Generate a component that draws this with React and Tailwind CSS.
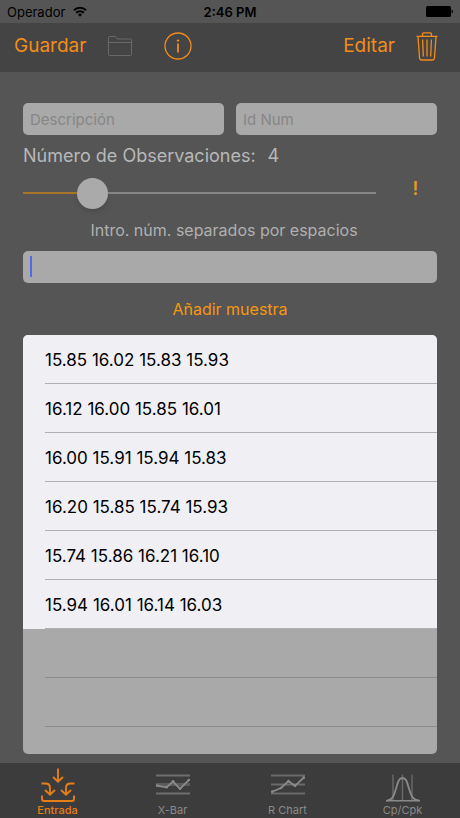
import React, { useState } from "react";

const samples = [
  "15.85 16.02 15.83 15.93",
  "16.12 16.00 15.85 16.01",
  "16.00 15.91 15.94 15.83",
  "16.20 15.85 15.74 15.93",
  "15.74 15.86 16.21 16.10",
  "15.94 16.01 16.14 16.03",
];

const MIN = 2;
const MAX = 14;

const fieldClass =
  "block w-full h-8 rounded-[5px] bg-[#a9a9a9] px-[7px] text-[15px] text-black placeholder:text-[#868686] outline-none";

const WifiIcon = () => (
  <svg width="14" height="11" viewBox="0 0 14 11" fill="none" stroke="#000" strokeWidth="2">
    <path d="M.9 4.2a8.7 8.7 0 0 1 12.2 0" />
    <path d="M3.2 6.7a5.4 5.4 0 0 1 7.6 0" />
    <path d="M7 10.8 4.9 8.5a3 3 0 0 1 4.2 0z" fill="#000" stroke="none" />
  </svg>
);

const BatteryIcon = () => (
  <svg width="27" height="11" viewBox="0 0 27 11">
    <rect x="0" y="0" width="25" height="11" rx="1.5" />
    <path d="M25.6 3.5q1.4.5 1.4 2t-1.4 2z" />
  </svg>
);

const FolderIcon = () => (
  <svg width="24" height="21" viewBox="0 0 24 21" fill="none" stroke="#696969" strokeWidth="1">
    <path d="M.5 18.5V1.5q0-1 1-1h5.8q.9 0 1.2.8l.8 1.7h13.2q1 0 1 1v14.500q0 1-1 1h-21q-1 0-1-1z" />
    <path d="M.5 6.500h23" />
  </svg>
);

const InfoIcon = () => (
  <svg width="28" height="28" viewBox="0 0 28 28" fill="none" stroke="currentColor">
    <circle cx="14" cy="14" r="13" strokeWidth="1.3" />
    <path d="M14 11.5v9" strokeWidth="1.8" />
    <circle cx="14" cy="8.6" r="1.2" fill="currentColor" stroke="none" />
  </svg>
);

const TrashIcon = () => (
  <svg width="22" height="29" viewBox="0 0 22 29" fill="none" stroke="currentColor" strokeWidth="1.3">
    <path d="M.5 4.3h21M6.5 4.2V2.100q0-1.200 1.200-1.200h6.600q1.200 0 1.200 1.200v2.100" />
    <path d="M2 4.500l1.500 21.200q.2 2.300 2.300 2.300h10.400q2.100 0 2.300-2.300L20 4.500" />
    <path d="M6.600 7.500l.7 17M11 7.500v17M15.400 7.500l-.7 17" />
  </svg>
);

const InputIcon = () => (
  <svg width="34" height="34" viewBox="0 0 34 34" fill="none" stroke="currentColor" strokeWidth="1.9">
    <path d="M17 .5v13M12 9l5 4.8L22 9" />
    <path d="M.5 15.5h4q4.5 0 4.5 4.5v6M4 22l5 4.8 5-4.8" />
    <path d="M33.5 15.5h-4q-4.5 0-4.5 4.5v6M20 22l5 4.8 5-4.8" />
    <path d="M1 27.5v3.5q0 2 2 2h28q2 0 2-2v-3.5" />
  </svg>
);

const XBarIcon = () => (
  <svg width="34" height="34" viewBox="0 0 34 34" fill="none" stroke="currentColor">
    <path d="M0 7.5h34M0 25.5h34" strokeWidth="2" opacity=".65" />
    <path d="M0 16.5h34" strokeWidth="3" opacity=".4" />
    <path d="M0 17.5l10.5 1.8 6.5-5.8 7 7.2 9.5-9.2" strokeWidth="1.8" />
    <g fill="currentColor" stroke="none">
      <circle cx="1.2" cy="17.5" r="1.3" />
      <circle cx="10.5" cy="19.2" r="1.4" />
      <circle cx="17" cy="13.5" r="1.4" />
      <circle cx="24" cy="20.5" r="1.4" />
      <circle cx="32.8" cy="12" r="1.3" />
    </g>
  </svg>
);

const RChartIcon = () => (
  <svg width="34" height="34" viewBox="0 0 34 34" fill="none" stroke="currentColor">
    <path d="M0 7.5h34M0 16.5h34M0 25.5h34" strokeWidth="2" opacity=".6" />
    <path d="M.5 24L10 20l7.5-6.8 6.5 4.6L33.5 9" strokeWidth="1.8" />
    <g fill="currentColor" stroke="none">
      <circle cx="1.3" cy="23.6" r="1.3" />
      <circle cx="10" cy="20" r="1.3" />
      <circle cx="17.5" cy="13.2" r="1.4" />
      <circle cx="24" cy="17.8" r="1.4" />
      <circle cx="32.8" cy="9.6" r="1.3" />
    </g>
  </svg>
);

const BellIcon = () => (
  <svg width="34" height="34" viewBox="0 0 34 34" fill="none" stroke="currentColor">
    <path d="M7 6.5v26M16.500 6.5v26M26 6.5v26" strokeWidth="1.4" opacity=".6" />
    <path d="M1 32.500C7 32 8.500 26 10.500 19 12 13.500 13 10 16.500 10S21 13.500 22.500 19C24.500 26 26 32 33 32.500" strokeWidth="1.8" />
    <path d="M0 32.8h34" strokeWidth="1.5" />
  </svg>
);

const tabs = [
  { label: "Entrada", Icon: InputIcon },
  { label: "X-Bar", Icon: XBarIcon },
  { label: "R Chart", Icon: RChartIcon },
  { label: "Cp/Cpk", Icon: BellIcon },
];

const App = () => {
  const [count, setCount] = useState(4);
  const [active, setActive] = useState("Entrada");
  const percent = ((count - MIN) / (MAX - MIN)) * 100;

  return (
    <div className="min-h-screen flex flex-col bg-[#555555] font-['Inter',sans-serif]">
      {/* Status bar */}
      <div className="h-[23px] grid grid-cols-3 items-center px-[7px] text-[13px] leading-4 text-black">
        <div className="flex items-center gap-2">
          <span>Operador</span>
          <WifiIcon />
        </div>
        <span className="text-center font-semibold">2:46 PM</span>
        <div className="flex justify-end">
          <BatteryIcon />
        </div>
      </div>

      {/* Toolbar */}
      <header className="h-[49px] flex items-center bg-[#444444] px-[14px] pb-[3px] text-[19px] text-[#f28c1c]">
        <button type="button">Guardar</button>
        <button type="button" aria-label="Abrir" className="ml-[22px]">
          <FolderIcon />
        </button>
        <button type="button" aria-label="Información" className="ml-8">
          <InfoIcon />
        </button>
        <button type="button" className="ml-auto">Editar</button>
        <button type="button" aria-label="Borrar" className="ml-[21px] mr-2">
          <TrashIcon />
        </button>
      </header>

      <main className="flex-1 flex flex-col gap-[9px] px-[23px] pt-[31px] pb-[9px]">
        <div className="grid grid-cols-2 gap-3">
          <input type="text" aria-label="Descripción" placeholder="Descripción" className={fieldClass} />
          <input type="text" aria-label="Id Num" placeholder="Id Num" className={fieldClass} />
        </div>

        <label htmlFor="count" className="flex gap-3 text-lg leading-6 text-[#b8b8b8]">
          <span>Número de Observaciones:</span>
          <span>{count}</span>
        </label>

        <div className="h-8 flex items-center">
          <div className="relative flex-1 flex items-center">
            <div className="absolute inset-x-0 h-[2px] bg-[#858585]">
              <div className="h-full bg-[#a87528]" style={{ width: `${percent}%` }} />
            </div>
            <input
              id="count"
              type="range"
              min={MIN}
              max={MAX}
              value={count}
              onChange={(e) => setCount(Number(e.target.value))}
              className="relative w-full h-8 appearance-none bg-transparent outline-none [&::-webkit-slider-thumb]:appearance-none [&::-webkit-slider-thumb]:size-[31px] [&::-webkit-slider-thumb]:rounded-full [&::-webkit-slider-thumb]:bg-[#aaaaaa] [&::-webkit-slider-thumb]:shadow-md"
            />
          </div>
          <button type="button" className="ml-[18px] w-[43px] pb-2 text-lg leading-6 font-semibold text-[#e89a1c]">
            !
          </button>
        </div>

        <label htmlFor="sample" className="pr-3 text-center text-base leading-6 text-[#b0b0b0]">
          Intro. núm. separados por espacios
        </label>

        <div className="relative">
          <input id="sample" type="text" className={fieldClass} />
          <span className="absolute left-[7px] top-[5px] h-[21px] w-[2px] bg-[#4f6bea]" />
        </div>

        <div className="flex-1 flex flex-col -mt-[9px]">
          <button type="button" className="h-[52px] self-center text-base text-[#f5980f]">
            Añadir muestra
          </button>

          <ul className="flex-1 overflow-hidden rounded-[5px] bg-[#a9a9a9] text-[17px] text-black">
            {samples.map((sample) => (
              <li key={sample} className="h-[49px] bg-[#efeff4] pl-[22px]">
                <div className="h-full flex items-center border-b border-[#b0b0b4] pt-[3px]">{sample}</div>
              </li>
            ))}
            {/* Empty rows */}
            <li className="ml-[22px] h-[49px] border-b border-[#8c8c8c]" />
            <li className="ml-[22px] h-[49px] border-b border-[#8c8c8c]" />
          </ul>
        </div>
      </main>

      {/* Tab bar */}
      <nav className="h-[55px] grid grid-cols-4 bg-[#3c3c3c]">
        {tabs.map(({ label, Icon }) => (
          <button
            key={label}
            type="button"
            onClick={() => setActive(label)}
            className={`flex flex-col items-center pt-[5px] text-[11px] leading-4 ${
              active === label ? "text-[#e67e17] font-medium" : "text-[#8a8a8a]"
            }`}
          >
            <Icon />
            <span>{label}</span>
          </button>
        ))}
      </nav>
    </div>
  );
};

export default App;
